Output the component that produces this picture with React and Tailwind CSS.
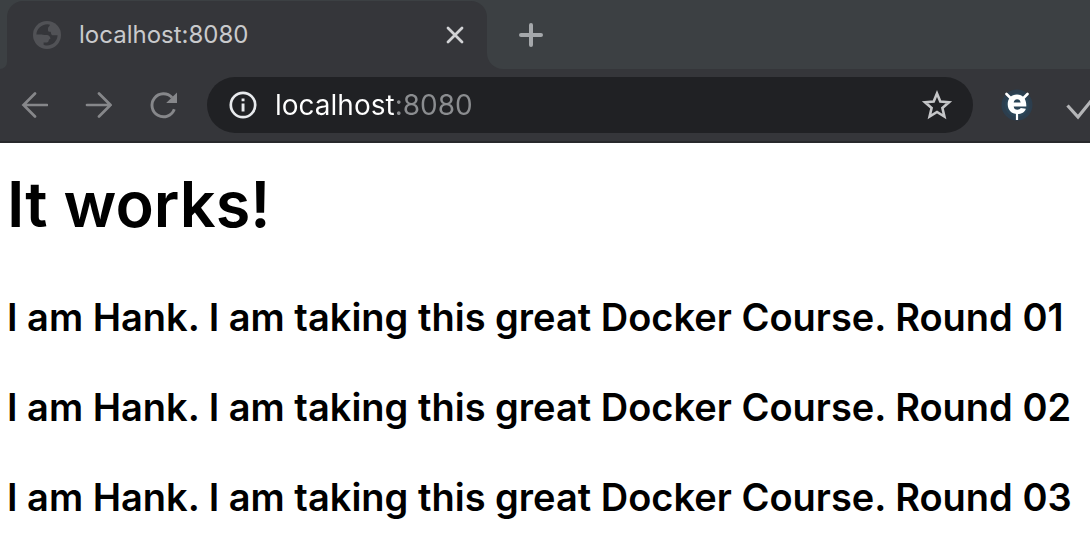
import { useState } from "react";

function GlobeIcon() {
  return (
    <svg viewBox="0 0 28 28" className="size-7 shrink-0" aria-hidden="true">
      <circle cx="14" cy="14" r="14" fill="#515256" />
      <path
        d="M3.400 13.600C3.500 8.200 8 3.600 14.500 3.300L17 3.700C17 5 15 5.600 15 7.400V9.400C15 10.300 15.800 10.700 17 10.700C17.600 10.700 18 11.200 18 12C18 13.600 19 14.300 20.500 14.300H24.600C24.400 19.800 20 24.400 14 24.500C12.400 24.500 11 24.200 10.600 23.800V21.400H14C15 21.400 15.600 20.700 15.700 19.600C15.800 18.600 16.400 18 17.400 18L17.200 16.600C16.600 15 15.600 14.200 14 14H11C9.600 14 9.600 13.600 8.400 13.600Z"
        fill="#35363a"
      />
    </svg>
  );
}

function ExtensionIcon() {
  return (
    <svg viewBox="0 0 32 32" className="size-8" aria-hidden="true">
      <circle cx="16" cy="16" r="15.500" fill="#2c3e4e" />
      <circle cx="16" cy="16" r="12" fill="#2b4557" />
      <path d="M5.500 5l5 5M26.500 5l-5 5" stroke="#fff" strokeWidth="2.600" strokeLinecap="round" />
      <path d="M16 23v8" stroke="#fff" strokeWidth="2.200" />
      <path
        fillRule="evenodd"
        d="M16 5.500c-5.800 0-9.300 4-9.300 9.700S10.500 25 16.300 25c4.300 0 7.500-2 8.600-5.300l-5.200-.6c-.7 1.100-1.800 1.600-3.300 1.600-2.100 0-3.500-1.200-3.700-3.300H25.300C25.600 10 22 5.500 16 5.500Zm-3.300 8c.2-2 1.500-3.300 3.400-3.300s3.300 1.200 3.500 3.300Z"
        fill="#fff"
      />
    </svg>
  );
}

function TabStrip() {
  return (
    <div className="flex h-[69px] bg-[#3c4043] pt-px">
      <div className="flex w-[7px] items-end bg-[#35363a]">
        <div className="h-full w-full rounded-br-2xl bg-[#3c4043]" />
      </div>
      <div className="flex w-[480px] items-center rounded-t-2xl bg-[#35363a] pr-4 pl-[26px]">
        <GlobeIcon />
        <span className="ml-[18px] flex-1 text-2xl font-[430] text-[#c9cacc]">localhost:8080</span>
        <button type="button" aria-label="Close tab" className="flex size-8 items-center justify-center">
          <svg viewBox="0 0 18 18" className="size-[18px]" fill="none" stroke="#d2d3d5" strokeWidth="2.800" strokeLinecap="round">
            <path d="M2 2l14 14M16 2L2 16" />
          </svg>
        </button>
      </div>
      <div className="flex w-4 items-end bg-[#35363a]">
        <div className="h-full w-full rounded-bl-2xl bg-[#3c4043]" />
      </div>
      <button type="button" aria-label="New tab" className="flex w-14 items-center justify-center">
        <svg viewBox="0 0 24 24" className="size-6" fill="none" stroke="#a5a8ab" strokeWidth="4" strokeLinecap="round">
          <path d="M12 2v20M2 12h20" />
        </svg>
      </button>
    </div>
  );
}

function Toolbar() {
  const [address, setAddress] = useState("localhost:8080");
  return (
    <div className="flex items-center overflow-hidden border-b-2 border-[#28292c] bg-[#35363a] py-2 pl-5">
      <div className="flex shrink-0 gap-9 text-[#86878a]">
        <button type="button" aria-label="Back">
          <svg viewBox="0 0 28 28" className="size-7" fill="none" stroke="currentColor" strokeWidth="2.700" strokeLinecap="round">
            <path d="M27 14H3.500M15 2.500L3.500 14L15 25.500" />
          </svg>
        </button>
        <button type="button" aria-label="Forward">
          <svg viewBox="0 0 28 28" className="size-7" fill="none" stroke="currentColor" strokeWidth="2.700" strokeLinecap="round">
            <path d="M3 14H26.500M15 2.500L26.500 14L15 25.500" />
          </svg>
        </button>
        <button type="button" aria-label="Reload">
          <svg viewBox="0 0 28 28" className="size-7 overflow-visible" aria-hidden="true">
            <path d="M24 6.500A11.500 11.500 0 1 0 26.300 18.200" fill="none" stroke="currentColor" strokeWidth="2.900" />
            <path d="M29 1.500V12H18.200Z" fill="currentColor" />
          </svg>
        </button>
      </div>
      <div className="ml-[31px] flex h-14 flex-1 items-center rounded-full bg-[#202124] pr-5 pl-[22px]">
        <button type="button" aria-label="View site information" className="shrink-0">
          <svg viewBox="0 0 28 28" className="size-7" aria-hidden="true">
            <circle cx="14" cy="14" r="12.200" fill="none" stroke="#e8eaed" strokeWidth="2.700" />
            <path d="M12.600 7.500h2.900v2.800h-2.900zM12.600 12.500h2.900v8h-2.900z" fill="#e8eaed" />
          </svg>
        </button>
        <input
          type="text"
          aria-label="Address"
          value={address}
          onChange={(event) => setAddress(event.target.value)}
          className="ml-[18px] min-w-0 flex-1 bg-[linear-gradient(to_right,#ffffff_121px,#8b8d90_121px)] bg-clip-text text-[28px] font-[430] text-transparent caret-white outline-none"
        />
        <button type="button" aria-label="Bookmark this page" className="shrink-0">
          <svg viewBox="0 0 32 32" className="size-8" fill="none" stroke="#c5c6c8" strokeWidth="2.600">
            <path d="M16 4.500L19.300 12.500L28 13.300L21.400 19L23.400 27.500L16 23L8.600 27.500L10.600 19L4 13.300L12.700 12.500Z" />
          </svg>
        </button>
      </div>
      <div className="ml-7 flex w-[89px] shrink-0 gap-8">
        <button type="button" aria-label="Extension" className="shrink-0">
          <ExtensionIcon />
        </button>
        <button type="button" aria-label="Tasks" className="shrink-0">
          <svg viewBox="0 0 32 32" className="size-8" fill="none" stroke="#b4b5b7" strokeWidth="3.200">
            <path d="M2.500 16.500L13 28L31 6" />
          </svg>
        </button>
      </div>
    </div>
  );
}

const rounds = ["01", "02", "03"];

export default function App() {
  return (
    <div className="min-h-screen bg-white font-['Inter','Liberation_Sans',sans-serif] text-black">
      <header>
        <TabStrip />
        <Toolbar />
      </header>
      <main className="px-[7px] pt-[23px]">
        <h1 className="text-[63px] leading-[76px] font-semibold">It works!</h1>
        <div className="mt-[53px] flex flex-col gap-[46px]">
          {rounds.map((round) => (
            <h3 key={round} className="text-[38px] leading-[44px] font-[580] whitespace-nowrap">
              I am Hank. I am taking this great Docker Course. Round {round}
            </h3>
          ))}
        </div>
      </main>
    </div>
  );
}
